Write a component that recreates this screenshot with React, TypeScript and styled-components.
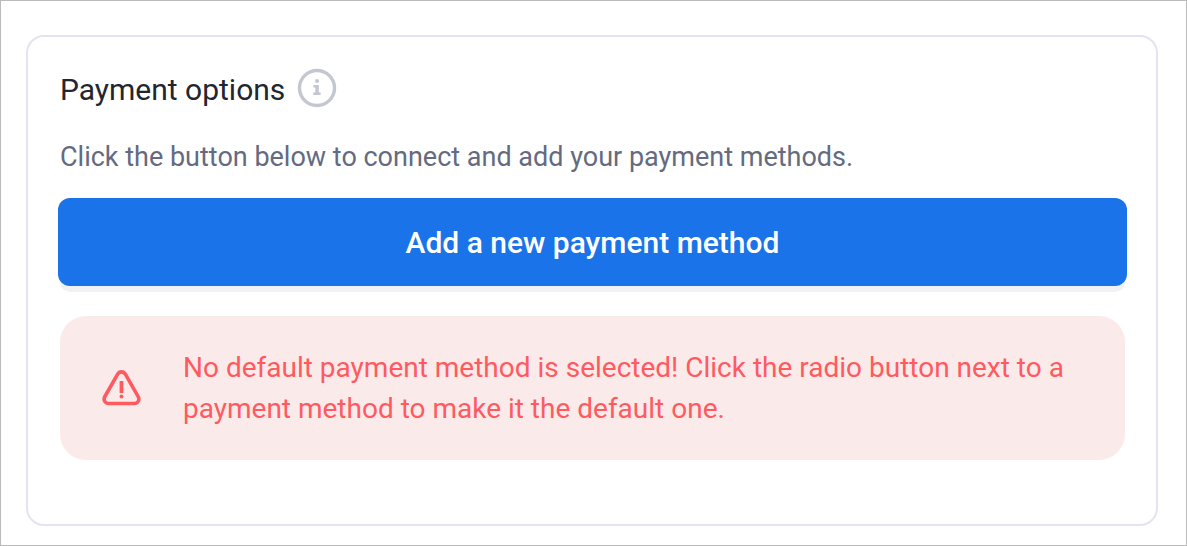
import React from "react";
import styled, { createGlobalStyle } from "styled-components";

const GlobalStyle = createGlobalStyle`
  *, *::before, *::after { box-sizing: border-box; }
  body {
    margin: 0;
    background: #fff;
    font-family: Roboto, "Liberation Sans", sans-serif;
  }
`;

const Page = styled.main`
  min-height: 100vh;
  padding: 34px 28px 19px 25px;
  border: 1px solid #bbb;
`;

const Card = styled.section`
  padding: 24px 31px 64px 32px;
  border: 2px solid #e2e5f1;
  border-radius: 18px;
  background: #fff;
`;

const Header = styled.header`
  display: flex;
  align-items: flex-start;
  gap: 12px;
  padding: 7px 0;
`;

const Title = styled.h1`
  margin: 0;
  font-size: 30px;
  font-weight: 400;
  line-height: 44px;
  color: #23262f;
`;

const InfoButton = styled.button`
  display: flex;
  padding: 0;
  border: 0;
  background: none;
  color: #c4c6d2;
  cursor: pointer;
`;

const Description = styled.p`
  margin: 18px 0 21px;
  font-size: 27px;
  line-height: 40px;
  color: #646b80;
`;

const PrimaryButton = styled.button`
  display: block;
  width: calc(100% + 4px);
  height: 88px;
  margin: 0 -2px 30px;
  padding: 0 16px;
  border: 0;
  border-radius: 12px;
  background: #1a73e8;
  box-shadow: 0 8px 0 -2px #f2f2f4;
  color: #fff;
  font-family: inherit;
  font-size: 30px;
  font-weight: 500;
  cursor: pointer;
`;

const Alert = styled.div`
  display: flex;
  align-items: center;
  gap: 42px;
  padding: 31px 40px 31px 42px;
  border-radius: 26px;
  background: #fbeaea;
  color: #ff5a5f;
`;

const AlertIcon = styled.svg`
  flex: none;
`;

const AlertText = styled.p`
  margin: 0;
  font-size: 28px;
  line-height: 41px;
`;

export default function App() {
  return (
    <>
      <GlobalStyle />
      <Page>
        <Card>
          <Header>
            <Title>Payment options</Title>
            <InfoButton type="button" aria-label="About payment options">
              <svg width="40" height="40" viewBox="0 0 40 40" aria-hidden="true">
                <circle cx="20" cy="20" r="17.5" fill="none" stroke="currentColor" strokeWidth="3.4" />
                <circle cx="20" cy="13" r="2" fill="currentColor" />
                <path d="M16.4 17h5.4v7.6h1.8V27h-7.4v-2.4h2.1v-5.200h-1.900z" fill="currentColor" />
              </svg>
            </InfoButton>
          </Header>
          <Description>
            Click the button below to connect and add your payment methods.
          </Description>
          <PrimaryButton type="button">Add a new payment method</PrimaryButton>
          <Alert role="alert">
            <AlertIcon width="39" height="36" viewBox="0 0 39 36" aria-hidden="true">
              <path
                d="M15.5 4.3 2.9 26.5c-2 3.6.3 7 4.1 7h25c3.8 0 6.1-3.4 4.1-7L23.5 4.3c-1.9-3.3-6.1-3.3-8 0z"
                fill="none"
                stroke="currentColor"
                strokeWidth="3.6"
                strokeLinejoin="round"
              />
              <path d="M19.5 11v12" stroke="currentColor" strokeWidth="3.8" />
              <circle cx="19.5" cy="26.500" r="2" fill="currentColor" />
            </AlertIcon>
            <AlertText>
              No default payment method is selected! Click the radio button next to a
              payment method to make it the default one.
            </AlertText>
          </Alert>
        </Card>
      </Page>
    </>
  );
}
